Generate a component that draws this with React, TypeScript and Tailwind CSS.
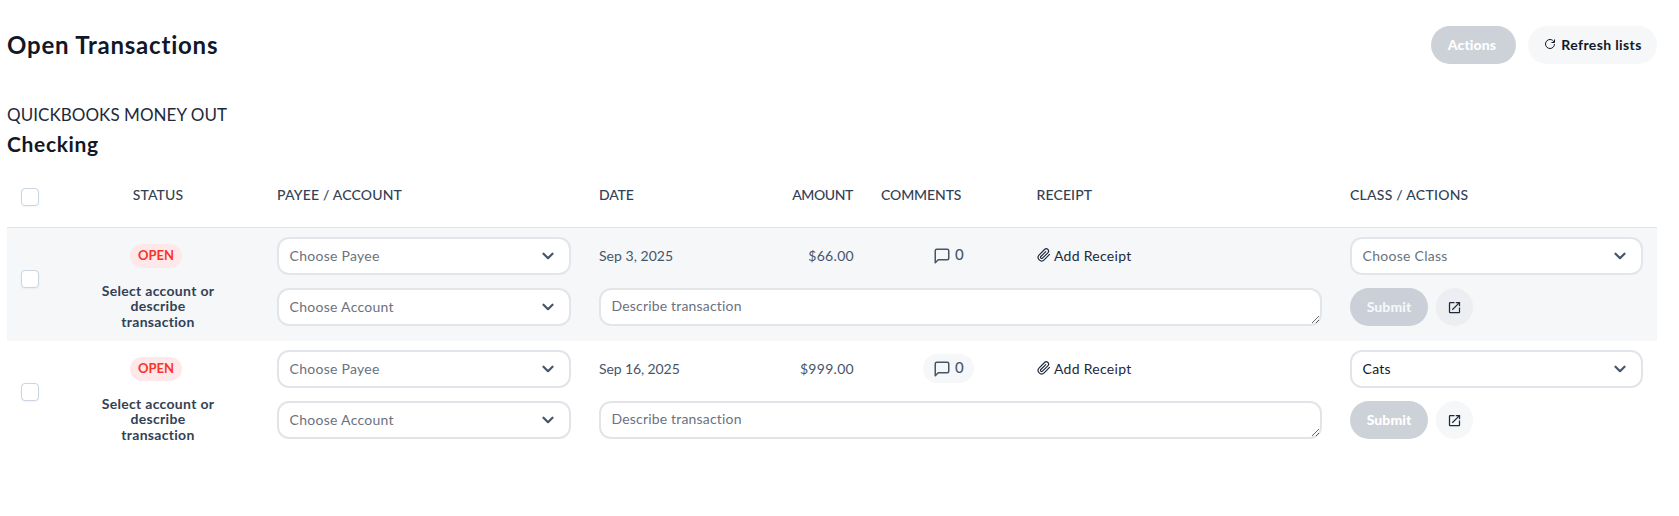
import type { ReactNode } from "react";
import { FiMessageSquare, FiPaperclip } from "react-icons/fi";
import { GrRefresh } from "react-icons/gr";
import { MdOpenInNew } from "react-icons/md";

const GRID = "grid grid-cols-[46px_210px_322px_127px_155px_156px_313px_321px]";

type Row = {
  date: ReactNode;
  amount: ReactNode;
  className?: string;
  striped?: boolean;
};

const rows: Row[] = [
  { date: <span className="tracking-[0.04px]">Sep 3, 2025</span>, amount: "$66.00", striped: true },
  { date: <span className="tracking-[-0.1px]">Sep 16, 2025</span>, amount: "$999.00", className: "Cats" },
];

function Checkbox() {
  return <span className="block size-[18px] rounded-[4px] border border-[#cbd5e1] bg-white shadow-xs" />;
}

function Select({ label, filled, striped }: { label: string; filled?: boolean; striped?: boolean }) {
  return (
    <div
      className={`flex h-[38px] items-center justify-between rounded-[12px] border-2 bg-white pl-[10.500px] pr-[15px] ${
        striped ? "border-[#e3e5e8]" : "border-[#e3e4ea]"
      }`}
    >
      <span className={`pb-[2px] text-[14px] tracking-[0.28px] ${filled ? "text-[#111827]" : "text-[#6b7280]"}`}>
        {label}
      </span>
      <svg viewBox="0 0 12 8" className="h-2 w-3 text-[#475569]" fill="none" stroke="currentColor" strokeWidth="2.2" strokeLinecap="round" strokeLinejoin="round">
        <path d="M1.500 1.700 6 6.200l4.500-4.500" />
      </svg>
    </div>
  );
}

function TransactionRow({ date, amount, className, striped }: Row) {
  return (
    <div className={`${GRID} h-[113px] ${striped ? "bg-[#f5f7f9]" : "bg-white"}`}>
      <div className="flex items-center pb-[11px] pl-[14px]">
        <Checkbox />
      </div>
      <div className="flex flex-col items-center pt-4">
        <span className="mr-1 flex h-6 w-[52px] items-center justify-center rounded-full bg-[#ffe8ea] text-[13px] font-bold text-[#fb3328]">
          OPEN
        </span>
        <p className="mt-[15px] w-[130px] text-center text-[14px] leading-[15.4px] font-bold tracking-[0.3px] text-[#334155]">
          Select account or describe
          <br />
          transaction
        </p>
      </div>
      <div className="flex flex-col gap-[13px] px-[14px] pt-[9px]">
        <Select label="Choose Payee" striped={striped} />
        <Select label="Choose Account" striped={striped} />
      </div>
      <div className="col-span-4 grid grid-cols-[127px_155px_156px_313px] content-start gap-y-[13px] pt-[9px]">
        <div className="flex h-[38px] items-center pb-[2px] pl-[14px] text-[14px] text-[#475569]">{date}</div>
        <div className="flex h-[38px] items-center justify-end pr-[13px] pb-[2px] text-[14px] tracking-[0.3px] text-[#475569]">
          {amount}
        </div>
        <div className="flex h-[38px] items-center pb-[1px] pl-14">
          <span
            className={`flex h-[29px] w-[51px] items-center gap-[4px] rounded-full pl-[10px] text-[14px] font-medium text-[#475569] ${
              striped ? "" : "bg-[#f5f7f9]"
            }`}
          >
            <FiMessageSquare className="size-[18px]" strokeWidth={2} />
            <span className="pb-[2px] text-[15px]">0</span>
          </span>
        </div>
        <div className="flex h-[38px] items-center gap-[3px] pb-[2px] pl-[14px] text-[14px] tracking-[0.28px] text-[#1e293b]">
          <FiPaperclip className="size-[14px]" />
          Add Receipt
        </div>
        <div className="col-span-4 px-[14px]">
          <textarea
            placeholder="Describe transaction"
            className={`block h-[38px] w-full resize overflow-hidden rounded-[12px] border-2 bg-white px-[10.500px] py-[6px] text-[14px] leading-[20px] tracking-[0.18px] placeholder:text-[#6b7280] ${
              striped ? "border-[#e3e5e8]" : "border-[#e3e4ea]"
            }`}
          />
        </div>
      </div>
      <div className="flex flex-col gap-[13px] px-[14px] pt-[9px]">
        <Select label={className ?? "Choose Class"} filled={!!className} striped={striped} />
        <div className="flex gap-2">
          <button
            className={`h-[38px] w-[78px] rounded-full pb-[2px] text-[14px] font-black tracking-[0.05px] ${
              striped ? "bg-[#cacfd8] text-[#f5f7f9]" : "bg-[#cdd2d9] text-white"
            }`}
          >
            Submit
          </button>
          <button
            className={`flex h-[38px] w-[37px] items-center justify-center rounded-full text-[#1e293b] ${
              striped ? "bg-[#edeef2]" : "bg-[#f5f7f9]"
            }`}
          >
            <MdOpenInNew className="size-[15px]" />
          </button>
        </div>
      </div>
    </div>
  );
}

export default function App() {
  return (
    <main className="h-[516px] w-[1679px] overflow-hidden bg-white pl-[7px] font-['Lato',sans-serif] text-[#111827]">
      <div className="w-[1650px]">
        <header className="flex h-[90px] items-center justify-between">
          <h1 className="pb-px text-[24px] font-bold tracking-[0.78px]">Open Transactions</h1>
          <div className="flex gap-3">
            <button className="h-[38px] w-[85px] rounded-full bg-[#cdd2d9] pr-[3px] pb-[2px] text-[14px] font-black tracking-[0.1px] text-white">
              Actions
            </button>
            <button className="flex h-[38px] w-[129px] items-center justify-center gap-[5px] rounded-full bg-[#f5f7f9] pb-[2px] pl-px text-[14px] font-bold tracking-[0.38px]">
              <GrRefresh className="size-[12px]" />
              Refresh lists
            </button>
          </div>
        </header>
        <div className="pt-[13px]">
          <p className="text-[17px] leading-6 tracking-[0.05px] text-[#1e293b]">QUICKBOOKS MONEY OUT</p>
          <h2 className="mt-[2px] mb-px text-[21px] leading-[30px] font-bold tracking-[0.65px]">Checking</h2>
        </div>
        <div className={`${GRID} h-[68px] border-b border-[#dde5ee] text-[14px] leading-5 font-medium text-[#334155]`}>
          <div className="pt-[28px] pl-[14px]">
            <Checkbox />
          </div>
          <div className="pt-[25px] text-center tracking-[0.1px]">STATUS</div>
          <div className="pt-[25px] pl-[14px] tracking-[0.18px]">PAYEE / ACCOUNT</div>
          <div className="pt-[25px] pl-[14px] tracking-[-0.15px]">DATE</div>
          <div className="pt-[25px] pr-[14px] text-right tracking-[-0.4px]">AMOUNT</div>
          <div className="pt-[25px] pl-[14px] tracking-[-0.1px]">COMMENTS</div>
          <div className="pt-[25px] pl-[13.500px] tracking-[0.13px]">RECEIPT</div>
          <div className="pt-[25px] pl-[14px] tracking-[0.25px]">CLASS / ACTIONS</div>
        </div>
        {rows.map((row, i) => (
          <TransactionRow key={i} {...row} />
        ))}
      </div>
    </main>
  );
}
